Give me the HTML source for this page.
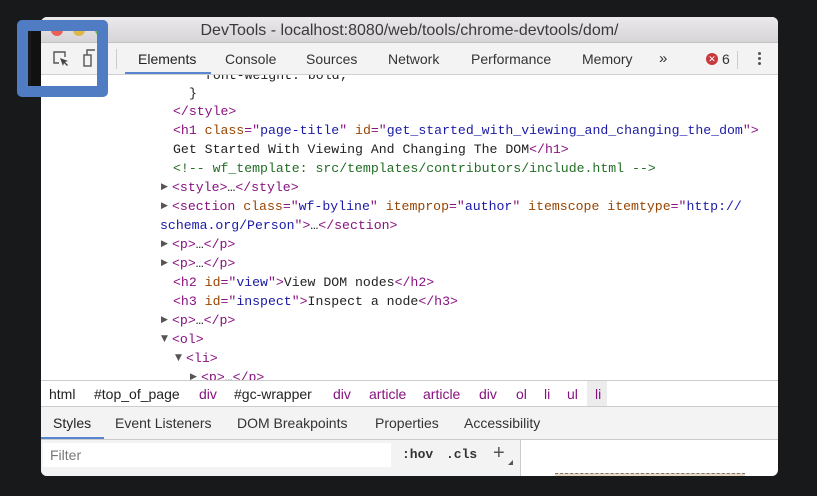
<!DOCTYPE html>
<html><head><meta charset="utf-8"><style>
*{margin:0;padding:0;box-sizing:border-box}
body{width:817px;height:496px;background:#18191b;position:relative;overflow:hidden;font-family:"Liberation Sans",sans-serif}
.win{position:absolute;left:41px;top:17px;width:737px;height:459px;background:#fff;border-radius:6px;overflow:hidden}
.title{position:absolute;left:0;top:0;width:737px;height:26px;background:linear-gradient(#ebe9eb,#d6d4d6);border-bottom:1px solid #c4c2c4;text-align:center;font-size:16px;line-height:27px;color:#3a3a3a}
.tb{position:absolute;left:0;top:26px;width:737px;height:32px;background:#f3f3f3;border-bottom:1px solid #d0d0d0;font-size:14px;color:#333}
.tb span{position:absolute;top:8px}
.code{position:absolute;left:0;top:58px;width:737px;height:305px;overflow:hidden;font-family:"Liberation Mono",monospace;font-size:13.2px;color:#222}
.l{position:absolute;white-space:pre;height:19px;line-height:19px}
.t{color:#881280}.a{color:#994500}.v{color:#1a1aa6}.c{color:#236e25}
.tri{position:absolute;font-size:9px;color:#555;font-family:"DejaVu Sans",sans-serif}
.bc{position:absolute;left:0;top:363px;width:737px;height:27px;background:#fff;border-top:1px solid #ccc;border-bottom:1px solid #ccc;font-size:14px;color:#222}
.bc span{position:absolute;top:5px;white-space:nowrap}
.p{color:#881280}
.tabs2{position:absolute;left:0;top:390px;width:737px;height:33px;background:#f3f3f3;border-bottom:1px solid #ccc;font-size:14px;color:#333}
.tabs2 span{position:absolute;top:8px}
.filt{position:absolute;left:0;top:423px;width:480px;height:36px;background:#f3f3f3;border-right:1px solid #ccc}
</style></head><body>
<div class="win">
 <div class="title">DevTools - localhost:8080/web/tools/chrome-devtools/dom/</div>
 <div style="position:absolute;left:10px;top:7px;width:12px;height:12px;border-radius:50%;background:#ec5f57"></div>
 <div style="position:absolute;left:32px;top:7px;width:12px;height:12px;border-radius:50%;background:#e0b744"></div>
 <div style="position:absolute;left:54px;top:7px;width:12px;height:12px;border-radius:50%;background:#6fbe4c"></div>
 <div class="tb">
  <span style="left:97px;color:#222">Elements</span>
  <div style="position:absolute;left:84px;top:29px;width:86px;height:2px;background:#5a85d0"></div>
  <div style="position:absolute;left:75px;top:6px;width:1px;height:20px;background:#ccc"></div>
  <span style="left:184px">Console</span>
  <span style="left:265px">Sources</span>
  <span style="left:347px">Network</span>
  <span style="left:430px">Performance</span>
  <span style="left:541px">Memory</span>
  <span style="left:618px;font-size:15px;top:7px">»</span>
  <div style="position:absolute;left:665px;top:10px;width:12px;height:12px;border-radius:50%;background:#c8393b;color:#fff;font-size:9px;line-height:12px;text-align:center">✕</div>
  <span style="left:681px">6</span>
  <div style="position:absolute;left:696px;top:8px;width:1px;height:18px;background:#ccc"></div>
  <div style="position:absolute;left:717px;top:9px;width:3px;height:3px;border-radius:50%;background:#555;box-shadow:0 5px 0 #555,0 10px 0 #555"></div>
 </div>
 <div class="code">
  <div class="l" style="left:164px;top:-9px">font-weight: bold;</div>
  <div class="l" style="left:148px;top:9px">}</div>
  <div class="l" style="left:132px;top:27px"><span class="t">&lt;/style&gt;</span></div>
  <div class="l" style="left:132px;top:46px"><span class="t">&lt;h1 </span><span class="a">class</span><span class="t">="</span><span class="v">page-title</span><span class="t">" </span><span class="a">id</span><span class="t">="</span><span class="v">get_started_with_viewing_and_changing_the_dom</span><span class="t">"&gt;</span></div>
  <div class="l" style="left:132px;top:65px">Get Started With Viewing And Changing The DOM<span class="t">&lt;/h1&gt;</span></div>
  <div class="l c" style="left:132px;top:84px">&lt;!-- wf_template: src/templates/contributors/include.html --&gt;</div>
  <span class="tri" style="left:120px;top:107px">▶</span>
  <div class="l" style="left:131px;top:103px"><span class="t">&lt;style&gt;</span>…<span class="t">&lt;/style&gt;</span></div>
  <span class="tri" style="left:120px;top:126px">▶</span>
  <div class="l" style="left:131px;top:122px"><span class="t">&lt;section </span><span class="a">class</span><span class="t">="</span><span class="v">wf-byline</span><span class="t">" </span><span class="a">itemprop</span><span class="t">="</span><span class="v">author</span><span class="t">" </span><span class="a">itemscope itemtype</span><span class="t">="</span><span class="v">http://</span></div>
  <div class="l" style="left:119px;top:141px"><span class="v">schema.org/Person</span><span class="t">"&gt;</span>…<span class="t">&lt;/section&gt;</span></div>
  <span class="tri" style="left:120px;top:164px">▶</span>
  <div class="l" style="left:131px;top:160px"><span class="t">&lt;p&gt;</span>…<span class="t">&lt;/p&gt;</span></div>
  <span class="tri" style="left:120px;top:183px">▶</span>
  <div class="l" style="left:131px;top:179px"><span class="t">&lt;p&gt;</span>…<span class="t">&lt;/p&gt;</span></div>
  <div class="l" style="left:132px;top:198px"><span class="t">&lt;h2 </span><span class="a">id</span><span class="t">="</span><span class="v">view</span><span class="t">"&gt;</span>View DOM nodes<span class="t">&lt;/h2&gt;</span></div>
  <div class="l" style="left:132px;top:217px"><span class="t">&lt;h3 </span><span class="a">id</span><span class="t">="</span><span class="v">inspect</span><span class="t">"&gt;</span>Inspect a node<span class="t">&lt;/h3&gt;</span></div>
  <span class="tri" style="left:120px;top:240px">▶</span>
  <div class="l" style="left:131px;top:236px"><span class="t">&lt;p&gt;</span>…<span class="t">&lt;/p&gt;</span></div>
  <span class="tri" style="left:120px;top:259px">▼</span>
  <div class="l" style="left:131px;top:255px"><span class="t">&lt;ol&gt;</span></div>
  <span class="tri" style="left:134px;top:278px">▼</span>
  <div class="l" style="left:145px;top:274px"><span class="t">&lt;li&gt;</span></div>
  <span class="tri" style="left:149px;top:297px">▶</span>
  <div class="l" style="left:160px;top:293px"><span class="t">&lt;p&gt;</span>…<span class="t">&lt;/p&gt;</span></div>
 </div>
 <div class="bc">
  <span style="left:8px">html</span><span style="left:53px">#top_of_page</span><span class="p" style="left:158px">div</span><span style="left:193px">#gc-wrapper</span><span class="p" style="left:292px">div</span><span class="p" style="left:328px">article</span><span class="p" style="left:382px">article</span><span class="p" style="left:438px">div</span><span class="p" style="left:475px">ol</span><span class="p" style="left:503px">li</span><span class="p" style="left:526px">ul</span>
  <div style="position:absolute;left:546px;top:0;width:20px;height:25px;background:#ececec"></div><span class="p" style="left:554px">li</span>
 </div>
 <div class="tabs2">
  <span style="left:12px;color:#222">Styles</span><span style="left:74px">Event Listeners</span><span style="left:196px">DOM Breakpoints</span><span style="left:334px">Properties</span><span style="left:423px">Accessibility</span>
  <div style="position:absolute;left:0;top:30px;width:63px;height:2px;background:#5a85d0"></div>
 </div>
 <div class="filt">
  <div style="position:absolute;left:2px;top:3px;width:348px;height:24px;background:#fff;font-size:14px;color:#777;padding:4px 7px">Filter</div>
  <span style="position:absolute;left:361px;top:7px;font-family:'Liberation Mono',monospace;font-size:13px;font-weight:bold;color:#333">:hov</span>
  <span style="position:absolute;left:405px;top:7px;font-family:'Liberation Mono',monospace;font-size:13px;font-weight:bold;color:#333">.cls</span>
  <span style="position:absolute;left:452px;top:2px;font-size:20px;color:#555">+</span>
  <div style="position:absolute;left:467px;top:20px;width:0;height:0;border-left:5px solid transparent;border-bottom:5px solid #555"></div>
 </div>
 <div style="position:absolute;left:514px;top:456px;width:190px;height:3px;border-top:1px dashed #777;background:#e8d9c4"></div>
</div>
<div style="position:absolute;left:17px;top:20px;width:91px;height:77px;border:11px solid #4f7cc2;border-radius:5px"></div>
<div style="position:absolute;left:31px;top:31px;width:10px;height:55px;background:#111"></div>
<svg style="position:absolute;left:52px;top:50px" width="18" height="18" viewBox="0 0 18 18"><path d="M7 13H2V2h11v5" fill="none" stroke="#555" stroke-width="1.4"/><path d="M8 8l8 3-3 1 3 3-1 1-3-3-1 3z" fill="#444"/></svg>
<svg style="position:absolute;left:82px;top:48px" width="14" height="20" viewBox="0 0 14 20"><rect x="2" y="7" width="7" height="11" fill="none" stroke="#555" stroke-width="1.4"/><path d="M5 7V2h8" fill="none" stroke="#555" stroke-width="1.4"/></svg>
</body></html>
